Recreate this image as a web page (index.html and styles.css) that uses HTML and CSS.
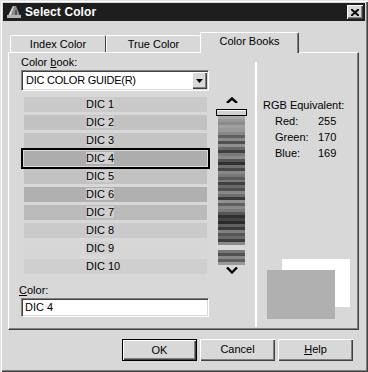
FILE: index.html
```html
<!DOCTYPE html>
<html lang="en">
  <head>
    <meta charset="UTF-8" />
    <title>Select Color</title>
    <link rel="stylesheet" href="styles.css">
  </head>
  <body>
    <div class="window">
      <div class="titlebar">
        <svg class="app-icon" width="16" height="14" viewBox="0 0 16 14">
          <polygon points="1,13 7,1 10,1 15,13" fill="#8c8c8c" />
          <polygon points="1,13 7,1 8,1 4,13" fill="#d8d8d8" />
          <rect x="1" y="10" width="14" height="3" fill="#b4b4b4" />
          <rect x="9" y="5" width="2" height="5" fill="#5a5a5a" />
        </svg>
        <span class="title">Select Color</span>
        <div class="close-btn">
          <svg width="8" height="7" viewBox="0 0 8 7">
            <path d="M0 0 L8 7 M8 0 L0 7" stroke="#000" stroke-width="2" />
          </svg>
        </div>
      </div>

      <div class="tabs">
        <div class="tab tab-index">Index Color</div>
        <div class="tab tab-true">True Color</div>
        <div class="tab tab-books active">Color Books</div>
      </div>

      <div class="panel">
        <div class="book-col">
          <div class="field-label">Color <u>b</u>ook:</div>
          <div class="select">
            <span class="select-text">DIC COLOR GUIDE(R)</span>
            <div class="select-btn">
              <svg width="7" height="4" viewBox="0 0 7 4"><polygon points="0,0 7,0 3.5,4" fill="#000" /></svg>
            </div>
          </div>

          <div class="color-list">
            <div class="color-row" style="background:#c9c9c9"><span>DIC 1</span></div>
            <div class="color-row" style="background:#c2c2c2"><span>DIC 2</span></div>
            <div class="color-row" style="background:#c4c4c4"><span>DIC 3</span></div>
            <div class="color-row selected" style="background:#adadad"><span>DIC 4</span></div>
            <div class="color-row" style="background:#c2c2c2"><span>DIC 5</span></div>
            <div class="color-row" style="background:#b0b0b0"><span>DIC 6</span></div>
            <div class="color-row" style="background:#bababa"><span>DIC 7</span></div>
            <div class="color-row" style="background:#cacaca"><span>DIC 8</span></div>
            <div class="color-row" style="background:#d6d6d6"><span>DIC 9</span></div>
            <div class="color-row" style="background:#cfcfcf"><span>DIC 10</span></div>
          </div>

          <div class="field-label color-label"><u>C</u>olor:</div>
          <div class="text-input">DIC 4</div>
        </div>

        <div class="scroller">
          <svg class="arrow" width="12" height="6" viewBox="0 0 12 6">
            <polyline points="1,6 6,1.5 11,6" fill="none" stroke="#000" stroke-width="2.4" />
          </svg>
          <div class="thumb"></div>
          <div class="strip strip-main"></div>
          <div class="strip strip-tail"></div>
          <svg class="arrow arrow-down" width="12" height="7" viewBox="0 0 12 7">
            <polyline points="1,0.5 6,5.5 11,0.5" fill="none" stroke="#000" stroke-width="2.4" />
          </svg>
        </div>

        <div class="rgb-col">
          <div class="rgb-title">RGB Equivalent:</div>
          <div class="rgb-grid">
            <span>Red:</span><span>255</span>
            <span>Green:</span><span>170</span>
            <span>Blue:</span><span>169</span>
          </div>
          <div class="swatches">
            <div class="swatch-old"></div>
            <div class="swatch-new"></div>
          </div>
        </div>
      </div>

      <div class="buttons">
        <div class="btn btn-default">OK</div>
        <div class="btn">Cancel</div>
        <div class="btn"><u>H</u>elp</div>
      </div>
    </div>
  </body>
</html>
```

FILE: styles.css
```css
body {
  margin: 0;
  padding: 0;
  font-family: "Liberation Sans", Arial, sans-serif;
  font-size: 11px;
  color: #000;
  background: #d8d8d8;
}
.window {
  width: 368px;
  height: 372px;
  box-sizing: border-box;
  overflow: hidden;
  background: #d8d8d8;
  box-shadow: inset 1px 1px #e4e4e4, inset 2px 2px #fff,
    inset -1px -1px #404040, inset -2px -2px #808080;
}
u {
  text-decoration: underline;
  text-underline-offset: 1px;
}

/* title bar */
.titlebar {
  margin: 3px 3px 0;
  height: 18px;
  background: #1e1e1e;
  display: flex;
  align-items: center;
}
.app-icon {
  margin-left: 3px;
  flex: none;
}
.title {
  margin-left: 3px;
  color: #fff;
  font-weight: bold;
  font-size: 12px;
  letter-spacing: 0.1px;
}
.close-btn {
  margin-left: auto;
  margin-right: 2px;
  width: 16px;
  height: 14px;
  box-sizing: border-box;
  background: #d8d8d8;
  box-shadow: inset 1px 1px #fff, inset -1px -1px #404040, inset -2px -2px #808080;
  display: flex;
  align-items: center;
  justify-content: center;
}

/* tabs */
.tabs {
  margin-top: 11px;
  padding-left: 10px;
  height: 20px;
  display: flex;
  align-items: flex-end;
}
.tab {
  height: 17px;
  box-sizing: border-box;
  padding-top: 2px;
  line-height: 13px;
  text-align: center;
  border-top: 1px solid #fff;
  border-left: 1px solid #fff;
  border-right: 1px solid #404040;
  border-radius: 2px 2px 0 0;
}
.tab-index {
  width: 96px;
}
.tab-true {
  width: 94px;
  border-right: none;
}
.tab-books {
  width: 99px;
}
.tab.active {
  height: 21px;
  margin-bottom: -1px;
  position: relative;
  z-index: 1;
  background: #d8d8d8;
  box-shadow: inset -1px 0 #808080;
  padding-top: 2px;
}

/* panel */
.panel {
  margin-left: 8px;
  width: 351px;
  height: 278px;
  box-sizing: border-box;
  border-top: 1px solid #fff;
  border-left: 1px solid #fff;
  border-right: 1px solid #404040;
  border-bottom: 1px solid #404040;
  box-shadow: inset -1px -1px #808080;
  display: flex;
  align-items: flex-start;
}
.book-col {
  margin-left: 12px;
  width: 188px;
  padding-top: 3px;
  display: flex;
  flex-direction: column;
}
.field-label {
  line-height: 13px;
  height: 13px;
}
.color-label {
  margin-top: 10px;
  margin-left: -2px;
}
.select,
.text-input {
  box-sizing: border-box;
  background: #fff;
  border-top: 1px solid #808080;
  border-left: 1px solid #808080;
  border-right: 1px solid #fff;
  border-bottom: 1px solid #fff;
  box-shadow: inset 1px 1px #404040, inset -1px -1px #d8d8d8;
}
.select {
  margin-top: 1px;
  height: 21px;
  display: flex;
  align-items: center;
  padding: 0 1px 0 4px;
}
.select-text {
  line-height: 13px;
  letter-spacing: -0.25px;
}
.select-btn {
  margin-left: auto;
  width: 15px;
  height: 17px;
  box-sizing: border-box;
  background: #d8d8d8;
  box-shadow: inset 1px 1px #fff, inset -1px -1px #404040, inset -2px -2px #808080;
  display: flex;
  align-items: center;
  justify-content: center;
}
.color-list {
  margin: 6px 2px 0 3px;
  display: flex;
  flex-direction: column;
  gap: 3px;
}
.color-row {
  height: 15px;
  line-height: 15px;
  padding-left: 62px;
}
.color-row span {
  background: #d0d0d0;
}
.color-row.selected {
  outline: 2px solid #000;
  outline-offset: 1px;
}
.text-input {
  margin-top: 1px;
  height: 19px;
  line-height: 15px;
  padding: 1px 3px;
}

/* stripe scroller */
.scroller {
  margin-left: 7px;
  width: 31px;
  padding-top: 44px;
  display: flex;
  flex-direction: column;
  align-items: center;
}
.thumb {
  margin-top: 6px;
  width: 31px;
  height: 7px;
  box-sizing: border-box;
  border: 1px solid #000;
  background: #d0d0d0;
  box-shadow: inset 0 1px #fff;
}
.strip {
  width: 27px;
}
.strip-main {
  height: 129px;
  background: linear-gradient(to bottom,
    #a8a8a8 0 3px, #989898 3px 6px, #8c8c8c 6px 9px, #a0a0a0 9px 12px,
    #999 12px 16px, #888 16px 19px, #606060 19px 22px, #8a8a8a 22px 25px,
    #505050 25px 28px, #909090 28px 31px, #686868 31px 34px, #404040 34px 37px,
    #7a7a7a 37px 40px, #8a8a8a 40px 43px, #555 43px 46px, #303030 46px 49px,
    #707070 49px 52px, #484848 52px 55px, #888 55px 58px, #787878 58px 61px,
    #5a5a5a 61px 64px, #7a7a7a 64px 66px, #404040 66px 69px, #6a6a6a 69px 72px,
    #505050 72px 75px, #888 75px 78px, #707070 78px 81px, #3a3a3a 81px 84px,
    #909090 84px 87px, #606060 87px 90px, #888 90px 93px, #7a7a7a 93px 96px,
    #555 96px 99px, #303030 99px 102px, #444 102px 105px, #2a2a2a 105px 108px,
    #606060 108px 111px, #3a3a3a 111px 114px, #808080 114px 117px, #555 117px 120px,
    #6a6a6a 120px 123px, #3c3c3c 123px 126px, #8a8a8a 126px 129px);
}
.strip-tail {
  margin-top: 5px;
  height: 15px;
  background: linear-gradient(to bottom,
    #777 0 3px, #505050 3px 6px, #888 6px 9px, #606060 9px 12px, #999 12px 15px);
}
.arrow-down {
  margin-top: 2px;
}

/* rgb column */
.rgb-col {
  margin-left: 8px;
  margin-top: 9px;
  height: 265px;
  flex: 1;
  border-left: 2px solid #fff;
  padding-left: 6px;
  padding-top: 35px;
  box-sizing: border-box;
  display: flex;
  flex-direction: column;
}
.rgb-title {
  line-height: 16px;
}
.rgb-grid {
  padding-left: 12px;
  display: grid;
  grid-template-columns: 43px auto;
  line-height: 16px;
}
.swatches {
  margin-top: auto;
  margin-left: -6px;
  margin-bottom: 8px;
  display: grid;
}
.swatch-old,
.swatch-new {
  grid-area: 1 / 1;
  width: 68px;
}
.swatch-old {
  margin-left: 25px;
  height: 48px;
  background: #fff;
}
.swatch-new {
  margin-left: 10px;
  margin-top: 11px;
  height: 49px;
  background: #b0b0b0;
}

/* buttons */
.buttons {
  margin-top: 9px;
  padding-right: 15px;
  display: flex;
  justify-content: flex-end;
  gap: 3px;
}
.btn {
  width: 75px;
  height: 22px;
  box-sizing: border-box;
  line-height: 20px;
  text-align: center;
  background: #d8d8d8;
  box-shadow: inset 1px 1px #fff, inset -1px -1px #404040, inset -2px -2px #808080;
}
.btn-default {
  border: 1px solid #000;
  line-height: 20px;
}
```
